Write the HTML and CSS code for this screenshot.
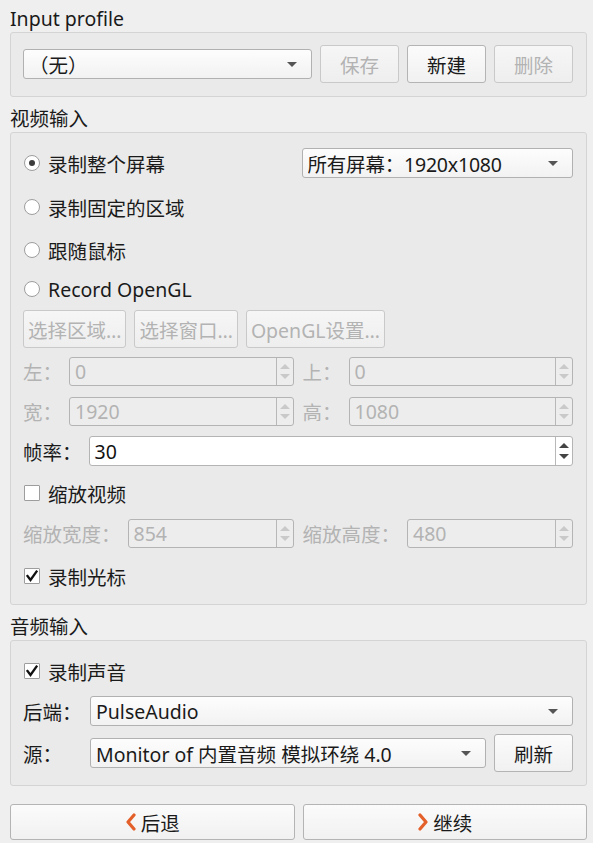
FILE: index.html
```html
<!DOCTYPE html>
<html lang="zh-CN">
<head>
<meta charset="utf-8">
<title>输入设置</title>
<link rel="stylesheet" href="styles.css">
</head>
<body>
<div class="page">

  <div class="title title-first">Input profile</div>
  <div class="group group-profile">
    <div class="line">
      <div class="combo grow"><span class="combo-text">（无）</span><span class="caret"></span></div>
      <button class="btn w79" disabled>保存</button>
      <button class="btn w79">新建</button>
      <button class="btn w79" disabled>删除</button>
    </div>
  </div>

  <div class="title">视频输入</div>
  <div class="group group-video">
    <div class="halves row30">
      <label class="opt"><span class="radio on"></span>录制整个屏幕</label>
      <div class="combo"><span class="combo-text tight">所有屏幕：1920x1080</span><span class="caret"></span></div>
    </div>
    <label class="opt row30 mt14"><span class="radio"></span>录制固定的区域</label>
    <label class="opt row30 mt13"><span class="radio"></span>跟随鼠标</label>
    <label class="opt row30 mt9"><span class="radio"></span>Record OpenGL</label>

    <div class="line tools mt6">
      <button class="btn pad" disabled>选择区域…</button>
      <button class="btn pad" disabled>选择窗口…</button>
      <button class="btn pad" disabled>OpenGL设置…</button>
    </div>

    <div class="halves mt9">
      <div class="field off"><span class="lbl">左：</span><div class="spin"><span class="val">0</span><span class="arrows"></span></div></div>
      <div class="field off"><span class="lbl">上：</span><div class="spin"><span class="val">0</span><span class="arrows"></span></div></div>
    </div>
    <div class="halves mt11">
      <div class="field off"><span class="lbl">宽：</span><div class="spin"><span class="val">1920</span><span class="arrows"></span></div></div>
      <div class="field off"><span class="lbl">高：</span><div class="spin"><span class="val">1080</span><span class="arrows"></span></div></div>
    </div>
    <div class="field mt10">
      <span class="lbl">帧率：</span><div class="spin live"><span class="val">30</span><span class="arrows"></span></div>
    </div>

    <label class="opt row28 mt13"><span class="check"></span>缩放视频</label>

    <div class="halves mt12">
      <div class="field off"><span class="lbl">缩放宽度：</span><div class="spin"><span class="val">854</span><span class="arrows"></span></div></div>
      <div class="field off"><span class="lbl">缩放高度：</span><div class="spin"><span class="val">480</span><span class="arrows"></span></div></div>
    </div>

    <label class="opt row28 mt14"><span class="check"><svg class="tick" viewBox="0 0 14 14" width="14" height="14"><polyline points="2.5,7 5.5,11 11.5,2.5" /></svg></span>录制光标</label>
  </div>

  <div class="title">音频输入</div>
  <div class="group group-audio">
    <label class="opt row28"><span class="check"><svg class="tick" viewBox="0 0 14 14" width="14" height="14"><polyline points="2.5,7 5.5,11 11.5,2.5" /></svg></span>录制声音</label>
    <div class="field mt11">
      <span class="lbl wide">后端：</span>
      <div class="combo grow"><span class="combo-text">PulseAudio</span><span class="caret"></span></div>
    </div>
    <div class="field line mt8">
      <span class="lbl wide">源：</span>
      <div class="combo grow"><span class="combo-text">Monitor of 内置音频 模拟环绕 4.0</span><span class="caret"></span></div>
      <button class="btn w79">刷新</button>
    </div>
  </div>

  <div class="nav">
    <button class="btn big">
      <svg class="chev" viewBox="0 0 12 18" width="12" height="18"><polyline points="9,2 3,9 9,16" /></svg>后退
    </button>
    <button class="btn big">
      <svg class="chev" viewBox="0 0 12 18" width="12" height="18"><polyline points="3,2 9,9 3,16" /></svg>继续
    </button>
  </div>

</div>
</body>
</html>
```

FILE: styles.css
```css
* { box-sizing: border-box; }

html, body {
  margin: 0;
  padding: 0;
  background: #efefef;
}

body {
  width: 593px;
  height: 843px;
  overflow: hidden;
  font-family: "Noto Sans", "Noto Sans CJK SC", sans-serif;
  font-size: 19.5px;
  color: #1a1a1a;
}

.page {
  padding: 0 6px 0 10px;
  display: flex;
  flex-direction: column;
}

/* group captions */
.title {
  height: 35px;
  padding-top: 9px;
  line-height: 25px;
}
.title-first {
  height: 32px;
  padding-top: 6px;
}

.group {
  border: 1px solid #d4d4d4;
  border-radius: 3px;
  background: #eaeaea;
  padding: 0 13px 0 12px;
  display: flex;
  flex-direction: column;
}
.group-profile { padding-top: 12px; padding-bottom: 13px; }
.group-video { padding-top: 15px; padding-bottom: 14px; }
.group-audio { padding-top: 16px; padding-bottom: 13px; }

.line {
  display: flex;
  align-items: center;
  gap: 8px;
}
.grow { flex: 1; min-width: 0; }

.halves {
  display: grid;
  grid-template-columns: 1fr 1fr;
  column-gap: 9px;
  align-items: center;
}
.halves > .combo { margin-left: -1px; }

.row30 { height: 30px; }
.row28 { height: 28px; }
.mt6 { margin-top: 6px; }
.mt8 { margin-top: 8px; }
.mt9 { margin-top: 9px; }
.mt10 { margin-top: 10px; }
.mt11 { margin-top: 11px; }
.mt12 { margin-top: 12px; }
.mt13 { margin-top: 13px; }
.mt14 { margin-top: 14px; }

/* push buttons */
.btn {
  font: inherit;
  color: #1a1a1a;
  height: 38px;
  padding: 0;
  border: 1px solid #b4b4b4;
  border-radius: 3px;
  background: linear-gradient(#fbfbfb, #f1f1f1);
  display: inline-flex;
  align-items: center;
  justify-content: center;
  white-space: nowrap;
}
.btn:disabled {
  color: #b3b3b3;
  border-color: #c9c9c9;
  background: linear-gradient(#f6f6f6, #eeeeee);
}
.w79 { width: 79px; flex: none; }
.pad { padding: 0 4px; }

/* drop-down combos */
.combo {
  height: 30px;
  border: 1px solid #b1b1b1;
  border-radius: 3px;
  background: linear-gradient(#fdfdfd, #f2f2f2);
  display: flex;
  align-items: center;
  padding: 0 14px 0 5px;
}
.combo-text {
  flex: 1;
  white-space: nowrap;
  overflow: hidden;
}
.combo-text.tight { letter-spacing: -0.2px; }
.caret {
  width: 0;
  height: 0;
  border-left: 5px solid transparent;
  border-right: 5px solid transparent;
  border-top: 5px solid #555;
}

/* radio buttons and check boxes */
.opt {
  display: flex;
  align-items: center;
  white-space: nowrap;
  padding-left: 1px;
}
.radio, .check {
  flex: none;
  width: 16px;
  height: 16px;
  margin-right: 8px;
  background: #fff;
  border: 1px solid #9d9d9d;
}
.radio {
  border-radius: 50%;
  display: flex;
  align-items: center;
  justify-content: center;
}
.radio.on::after {
  content: "";
  width: 6px;
  height: 6px;
  border-radius: 50%;
  background: #3c3c3c;
}
.check {
  border-radius: 1px;
  display: flex;
  align-items: center;
  justify-content: center;
}
.tick {
  fill: none;
  stroke: #111;
  stroke-width: 2.3;
  stroke-linecap: square;
  stroke-linejoin: miter;
}

/* label + spin box pairs */
.field {
  display: flex;
  align-items: center;
}
.lbl {
  flex: none;
  white-space: nowrap;
  margin-right: 7px;
}
.lbl.wide { width: 67px; margin-right: 0; }
.field.line .lbl.wide { width: 59px; }
.field.off .lbl { color: #b3b3b3; }

.spin {
  flex: 1;
  min-width: 0;
  height: 29px;
  border: 1px solid #b4b4b4;
  border-radius: 3px;
  background: #ededed;
  display: flex;
  align-items: stretch;
  color: #b3b3b3;
}
.spin.live {
  background: #fff;
  color: #111;
  height: 30px;
}
.val {
  flex: 1;
  padding-left: 5px;
  display: flex;
  align-items: center;
}
.arrows {
  width: 17px;
  border-left: 1px solid #b8b8b8;
  position: relative;
}
.arrows::before, .arrows::after {
  content: "";
  position: absolute;
  left: 3px;
  width: 0;
  height: 0;
  border-left: 5px solid transparent;
  border-right: 5px solid transparent;
}
.arrows::before {
  top: 6px;
  border-bottom: 5px solid #c9c9c9;
}
.arrows::after {
  bottom: 6px;
  border-top: 5px solid #c9c9c9;
}
.live .arrows::before { border-bottom-color: #444; }
.live .arrows::after { border-top-color: #444; }

/* back / next */
.nav {
  margin-top: 18px;
  display: grid;
  grid-template-columns: 1fr 1fr;
  column-gap: 8px;
}
.btn.big {
  height: 36px;
  gap: 4px;
}
.chev {
  fill: none;
  stroke: #e4602a;
  stroke-width: 3.2;
  stroke-linecap: round;
  stroke-linejoin: round;
}
```
